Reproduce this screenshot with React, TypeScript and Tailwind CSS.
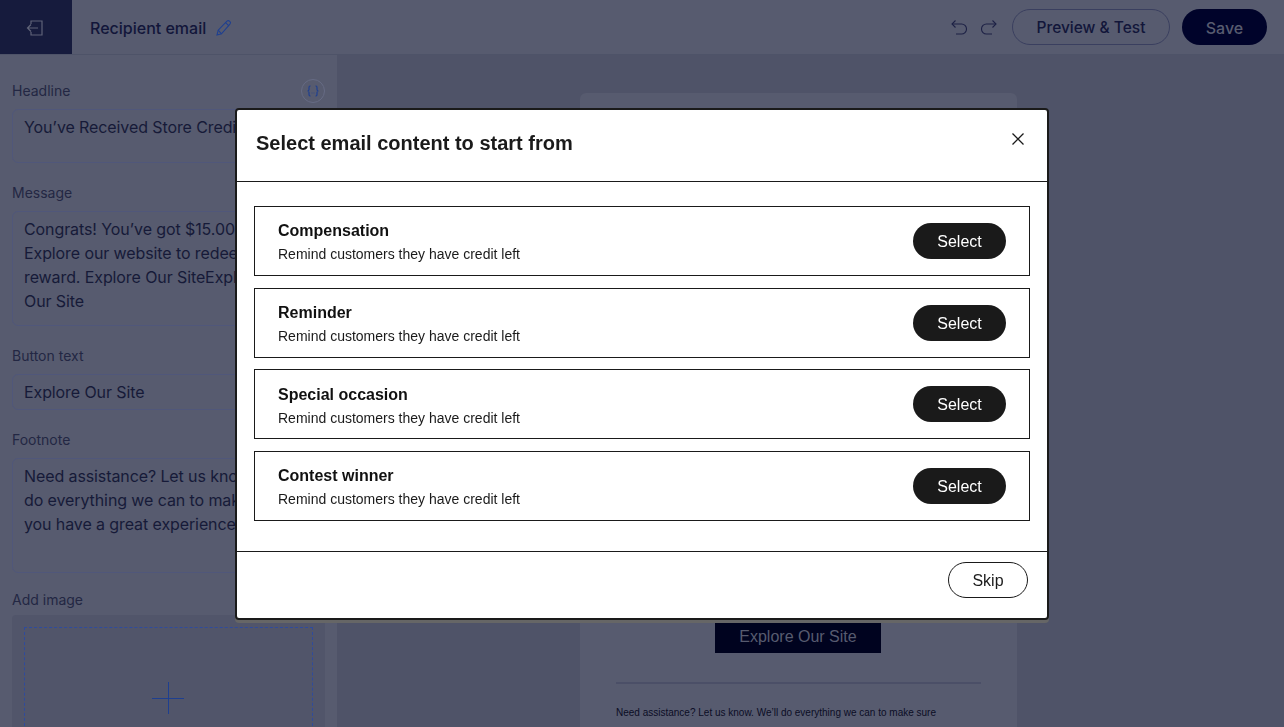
const templates = ['Compensation', 'Reminder', 'Special occasion', 'Contest winner']

const uiFont = { fontFamily: 'Inter' }

function Label({ children }: { children: string }) {
  return <p className="text-[14px] leading-[18px] text-[#232743] mb-[9px]">{children}</p>
}

function Field({ lines, height, mb }: { lines: string[]; height: string; mb: string }) {
  return (
    <div className={`${height} ${mb} w-[313px] overflow-hidden rounded-[6px] border border-[#50577a] px-[11px] py-[5px] text-[16px] leading-[24px] tracking-[-0.1px] text-[#161a38] whitespace-nowrap`}>
      {lines.map(l => <div key={l}>{l}</div>)}
    </div>
  )
}

function Sidebar() {
  return (
    <aside className="w-[338px] h-full shrink-0 overflow-hidden bg-[#575b6f] border-r border-[#4f5368] pl-3 pt-[27px]">
      <div className="relative">
        <Label>Headline</Label>
        <div className="absolute right-[12px] -top-[3px] flex h-6 w-6 items-center justify-center rounded-full border border-[#666b84]">
          <svg width="14" height="14" viewBox="0 0 14 14" fill="none" stroke="#1e3f90" strokeWidth="1.200">
            <path d="M4.500 2H4C3 2 3 2.600 3 3.400v2.100C3 6.400 2.400 7 1.500 7 2.400 7 3 7.600 3 8.500v2.100c0 .8 0 1.400 1 1.400h.5" />
            <path d="M9.500 2h.5c1 0 1 .6 1 1.400v2.100c0 .9.600 1.500 1.500 1.500-.9 0-1.500.6-1.500 1.500v2.100c0 .8 0 1.400-1 1.400h-.5" />
            <path d="M5.700 9h.6M7.700 9h.6" />
          </svg>
        </div>
      </div>
      <Field height="h-[54px]" mb="mb-[21px]" lines={['You’ve Received Store Credit']} />
      <Label>Message</Label>
      <Field
        height="h-[115px]"
        mb="mb-[21px]"
        lines={['Congrats! You’ve got $15.00', 'Explore our website to redeem', 'reward. Explore Our SiteExplore', 'Our Site']}
      />
      <Label>Button text</Label>
      <Field height="h-[36px]" mb="mb-[21px]" lines={['Explore Our Site']} />
      <Label>Footnote</Label>
      <Field
        height="h-[115px]"
        mb="mb-[18px]"
        lines={['Need assistance? Let us know.', 'do everything we can to make', 'you have a great experience.']}
      />
      <Label>Add image</Label>
      <div className="-mt-[3px] w-[313px] h-[200px] rounded-[4px] bg-[#51556a] px-3 pt-3">
        <div className="h-[200px] border border-dashed border-[#2f4b9c] flex justify-center pt-[54px] pr-[1px]">
          <svg width="32" height="32" viewBox="0 0 32 32" stroke="#1e3f90" strokeWidth="1">
            <path d="M0 16.500h32M16.500 0v32" />
          </svg>
        </div>
      </div>
    </aside>
  )
}

function EmailPreview() {
  return (
    <main className="flex-1 h-full overflow-hidden bg-[#4f5368] pl-[242px] pt-[38px]">
      <div className="w-[437px] h-[700px] rounded-t-[6px] bg-[#575b6f] px-[36px] pt-[526px] font-['Liberation_Sans',sans-serif]">
        <div className="ml-[99px] flex h-[34px] w-[166px] items-center justify-center bg-[#00031f] pt-[2px] text-[16px] text-[#575b6f]">
          Explore Our Site
        </div>
        <div className="mt-[29px] border-t-2 border-[#4b4f67]" />
        <p className="mt-[22px] text-[10px] leading-[14px] text-[#0b0d25]">
          Need assistance? Let us know. We’ll do everything we can to make sure
        </p>
      </div>
    </main>
  )
}

function TemplateModal() {
  return (
    <div className="fixed inset-0 flex items-center justify-center font-['Liberation_Sans',sans-serif]">
      <div className="flex h-[512px] w-[814px] flex-col rounded-[4px] border-2 border-[#1a1a1a] bg-white shadow-[0_3px_0_0_#666666]">
        <div className="flex h-[72px] shrink-0 items-start justify-between border-b border-[#1a1a1a] pl-[19px] pr-[22px]">
          <h2 className="mt-[20.5px] text-[20px] leading-[26px] font-bold text-[#1a1a1a]">Select email content to start from</h2>
          <svg className="mt-[22px]" width="14" height="14" viewBox="0 0 14 14" stroke="#1a1a1a" strokeWidth="1.300" fill="none">
            <path d="M1.500 1.500l11 11M12.500 1.500l-11 11" />
          </svg>
        </div>
        <div className="flex flex-1 flex-col gap-[11.67px] px-[17px] pt-[24.5px]">
          {templates.map(name => (
            <div key={name} className="flex h-[70px] items-center justify-between border border-[#1a1a1a] pl-[23px] pr-[23px]">
              <div className="pt-[2.5px]">
                <p className="text-[16px] leading-[20px] font-bold text-[#111]">{name}</p>
                <p className="mt-[4px] text-[14px] leading-[18px] text-[#1a1a1a]">Remind customers they have credit left</p>
              </div>
              <button className="h-9 w-[93px] rounded-full bg-[#1a1a1a] pt-[2px] text-[16px] text-white">Select</button>
            </div>
          ))}
        </div>
        <div className="flex h-[67px] shrink-0 items-start justify-end border-t border-[#1a1a1a] pr-[19px] pt-[10px]">
          <button className="h-9 w-[80px] rounded-full border border-[#1a1a1a] pt-[2px] text-[16px] text-[#1a1a1a]">Skip</button>
        </div>
      </div>
    </div>
  )
}

export default function App() {
  return (
    <div className="relative flex h-[727px] w-full flex-col overflow-hidden" style={uiFont}>
      <header className="flex h-[55px] shrink-0 items-center border-b border-[#4e5368] bg-[#575b6f]">
        <div className="flex h-[54px] w-[72px] items-center justify-center self-start bg-[#161b3d] pt-[1px] pr-[2px]">
          <svg width="18" height="18" viewBox="0 0 18 18" fill="none" stroke="#5f6378" strokeWidth="1.200">
            <path d="M5 5V2h11v14H5v-3" />
            <path d="M12 9H1.500M5 5.500L1.500 9 5 12.500" />
          </svg>
        </div>
        <span className="ml-[18px] pt-[2px] text-[16px] font-medium text-[#12163a]">Recipient email</span>
        <svg className="ml-[10px] mt-[1px]" width="16" height="17" viewBox="0 0 16 17" fill="none" stroke="#1e3f90" strokeWidth="1.100">
          <path d="M1 16l1.200-4.800L11 2.200c.8-.8 1.700-.8 2.400-.1l.6.600c.7.700.7 1.600-.1 2.400L5.500 14.800 1 16z" />
          <path d="M9.600 3.600l3.300 3.300M2.200 11.200l3.300 3.600" />
        </svg>
        <div className="ml-auto flex items-center">
          <svg width="16" height="16" viewBox="0 0 16 16" fill="none" stroke="#1d2145" strokeWidth="1.100">
            <path d="M4.500 1.500L1 5l3.500 3.500" />
            <path d="M1 5h9.500a5 5 0 010 10H5" />
          </svg>
          <svg className="ml-[14px]" width="16" height="16" viewBox="0 0 16 16" fill="none" stroke="#1d2145" strokeWidth="1.100">
            <path d="M11.500 1.500L15 5l-3.500 3.500" />
            <path d="M15 5H5.500a5 5 0 000 10H11" />
          </svg>
          <button className="ml-[15px] h-[36px] w-[158px] rounded-full border border-[#3a3f5f] pt-[2px] text-[15.500px] font-medium text-[#12163a]">
            Preview &amp; Test
          </button>
          <button className="ml-3 mr-[17px] h-[36px] w-[85px] rounded-full bg-[#00032a] pt-[2px] text-[16px] font-medium text-[#575b6f]">
            Save
          </button>
        </div>
      </header>
      <div className="flex min-h-0 flex-1">
        <Sidebar />
        <EmailPreview />
      </div>
      <TemplateModal />
    </div>
  )
}
